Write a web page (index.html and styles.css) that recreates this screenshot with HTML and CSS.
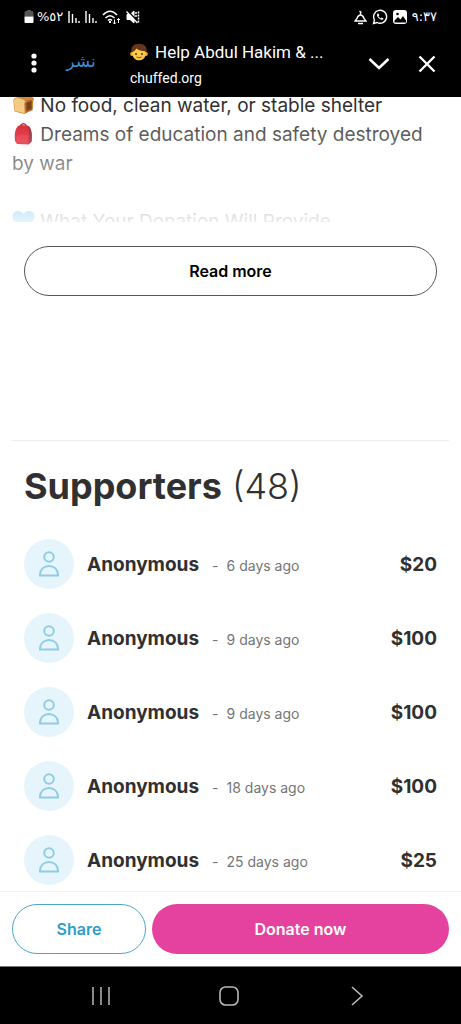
FILE: index.html
```html
<!DOCTYPE html>
<html lang="en">
<head>
<meta charset="utf-8">
<meta name="viewport" content="width=device-width, initial-scale=1">
<title>Help Abdul Hakim</title>
<link rel="stylesheet" href="styles.css">
</head>
<body>
<svg class="defs" aria-hidden="true">
  <symbol id="person" viewBox="0 0 24 28">
    <circle cx="12" cy="7" r="4.800"/>
    <path d="M3 25.500v-1c0-5 4-8.500 9-8.500s9 3.500 9 8.500v1z"/>
  </symbol>
</svg>

<header class="top">
  <div class="status">
    <div class="status-side">
      <svg class="battery" width="10" height="14" viewBox="0 0 10 14"><path d="M3 0h4v1h1.500l1 1v4.500H.5V2l1-1H3z" fill="#555"/><path d="M.5 6.500h9V12q0 1-1 1h-7q-1 0-1-1z" fill="#fff"/></svg>
      <span class="percent">%٥٢</span>
      <svg class="signal" width="12" height="14" viewBox="0 0 12 14"><path d="M1 1v12M4.500 4v9M8 8v5M11 11v2" stroke="#fff" stroke-width="1.400"/></svg>
      <svg class="signal" width="12" height="14" viewBox="0 0 12 14"><path d="M1 1v12M4.500 4v9M8 8v5M11 11v2" stroke="#fff" stroke-width="1.400"/></svg>
      <svg class="wifi" width="19" height="15" viewBox="0 0 19 15" fill="none" stroke="#fff" stroke-width="1.600"><path d="M1 5Q8-2.500 15 5M3.500 8Q8 3.500 12.500 8M6 10.500q2-2 4 0"/><path d="M8 11v2" stroke-width="2"/><path d="M12.500 9.500V14m-1.500-1.500l1.500 1.500 1.500-1.500M16.500 13V8.500M15 10l1.500-1.500L18 10" stroke-width="1"/></svg>
      <svg class="mute" width="14" height="14" viewBox="0 0 14 14" fill="none" stroke="#fff"><path d="M1 4.500h3L8 1v12L4 9.500H1z" fill="#fff"/><path d="M2 1l10 11" stroke="#000" stroke-width="1.500"/><path d="M.5 1.500l11 11.500" stroke-width="1.300"/><path d="M10 2v5M12.500 1.500v11" stroke-width="1.500" stroke-dasharray="2 1"/></svg>
    </div>
    <div class="status-side">
      <svg width="13" height="15" viewBox="0 0 13 15" fill="none" stroke="#fff" stroke-width="1.400"><path d="M6.500 5C4 5 3.500 7 3 8.500L1 11h11L10 8.500C9.500 7 9 5 6.500 5zM6.500 5V1.500M5.500 1l2 1.500M4 13.500h5"/></svg>
      <svg width="16" height="16" viewBox="0 0 16 16" fill="none" stroke="#fff" stroke-width="1.400"><path d="M1.500 14.500l1-3.500a6.500 6.500 0 1 1 2.600 2.500z"/><path d="M5.500 4.500c-2 2.500 3 7.500 5.500 6l.5-1-2-1-1 1-2-2 .8-1-.8-2z" fill="#fff" stroke="none"/></svg>
      <svg width="14" height="14" viewBox="0 0 14 14"><rect width="14" height="14" rx="3" fill="#fff"/><path d="M1.500 10.500L5 7l2.500 2.500L10 6l3 4.500v2H1.500z"/><circle cx="4.500" cy="4" r="1.300"/></svg>
      <time class="clock">٩:٣٧</time>
    </div>
  </div>
  <div class="browser">
    <button class="icon-button" aria-label="More options"><svg width="6" height="22" viewBox="0 0 6 22" fill="#fff"><circle cx="3" cy="3" r="2.600"/><circle cx="3" cy="10" r="2.600"/><circle cx="3" cy="17" r="2.600"/></svg></button>
    <button class="publish" lang="ar">نشر</button>
    <div class="page-id">
      <div class="page-title">
        <svg width="18" height="18" viewBox="0 0 18 18"><path d="M1.500 9.500C.5 3.500 4 .8 9 .8s8.500 2.700 7.500 8.700z" fill="#65371c"/><circle cx="2" cy="11" r="1.900" fill="#efaa22"/><circle cx="16" cy="11" r="1.900" fill="#efaa22"/><path d="M2.200 9C4 8.500 5.500 7 6.500 5.500c2 2 5.500 2.500 8 2.500l1.300 1.500c.2 5-2.800 7.800-6.800 7.800S1.900 14 2.200 9z" fill="#ffca42"/><circle cx="6" cy="11" r="1" fill="#45301f"/><circle cx="12" cy="11" r="1" fill="#45301f"/><path d="M6.500 14q2.500 1.800 5 0" fill="none" stroke="#8a4e18"/></svg>
        <span>Help Abdul Hakim &amp; ...</span>
      </div>
      <div class="domain">chuffed.org</div>
    </div>
    <button class="icon-button" aria-label="Minimise"><svg width="22" height="14" viewBox="0 0 22 14" fill="none" stroke="#fff" stroke-width="2.600"><path d="M1.500 2l9.500 9 9.500-9"/></svg></button>
    <button class="icon-button close" aria-label="Close"><svg width="18" height="18" viewBox="0 0 18 18" fill="none" stroke="#fff" stroke-width="2.400"><path d="M1.500 1.500l15 15M16.500 1.500l-15 15"/></svg></button>
  </div>
</header>

<main class="content">
  <section class="story">
    <p class="story-text">
      <svg class="emoji" viewBox="0 0 22 22"><path d="M1 8C0 4 4 3 8 3l10-.5c4 .5 4 3.500 2.500 5L20 16l-8 4-10-2.500z" fill="#d58b3b"/><path d="M1.500 8C0 4 6 3.500 9 5c4 1 4.500 3 3 5v9L2.500 17z" fill="#f3cb83"/><path d="M12 9c2-4 8-4 8-2v9l-7 3z" fill="#b76a28"/><path d="M14 9l5-2v8l-5 2z" fill="#79401b"/></svg>
      No food, clean water, or stable shelter<br>
      <svg class="emoji" viewBox="0 0 22 22"><path d="M8 2.500q3-3.500 6 0" fill="none" stroke="#a61c2b" stroke-width="1.500"/><path d="M2.500 18C1.500 10 3 3 8 2l7 .5c4 2 5 9 4 16l-3 3-11.500-.5z" fill="#d80a1c"/><path d="M15 2.500c4 2 5 9 4 16L16 21.500C17 14 17 7 15 2.500z" fill="#7c1220"/><path d="M4 12.500q6-1.500 11 0V19q-6 1-11 0z" fill="#e21426"/></svg>
      Dreams of education and safety destroyed by war<br><br>
      <svg class="emoji" viewBox="0 0 22 22"><path d="M11 20C5 15 0 12 0 6c0-5 8-7 11-2 3-5 11-3 11 2 0 6-5 9-11 14z" fill="#0098e4"/></svg>
      What Your Donation Will Provide
    </p>
  </section>
  <button class="button read-more">Read more</button>

  <section class="supporters">
    <h2 class="heading">Supporters <span class="count">(48)</span></h2>
    <ul class="list">
      <li class="row"><span class="avatar"><svg><use href="#person"/></svg></span><span class="name">Anonymous</span><span class="age"><span>-</span><span>6 days ago</span></span><span class="amount">$20</span></li>
      <li class="row"><span class="avatar"><svg><use href="#person"/></svg></span><span class="name">Anonymous</span><span class="age"><span>-</span><span>9 days ago</span></span><span class="amount">$100</span></li>
      <li class="row"><span class="avatar"><svg><use href="#person"/></svg></span><span class="name">Anonymous</span><span class="age"><span>-</span><span>9 days ago</span></span><span class="amount">$100</span></li>
      <li class="row"><span class="avatar"><svg><use href="#person"/></svg></span><span class="name">Anonymous</span><span class="age"><span>-</span><span>18 days ago</span></span><span class="amount">$100</span></li>
      <li class="row"><span class="avatar"><svg><use href="#person"/></svg></span><span class="name">Anonymous</span><span class="age"><span>-</span><span>25 days ago</span></span><span class="amount">$25</span></li>
    </ul>
  </section>
</main>

<div class="actions">
  <button class="button share">Share</button>
  <button class="button donate">Donate now</button>
</div>

<nav class="system-nav">
  <button class="icon-button" aria-label="Recent apps"><svg width="20" height="20" viewBox="0 0 20 20" stroke="#b8b8b8" stroke-width="1.500"><path d="M2 1v18M10 1v18M18 1v18"/></svg></button>
  <button class="icon-button" aria-label="Home"><svg width="20" height="20" viewBox="0 0 20 20" fill="none" stroke="#b8b8b8" stroke-width="1.600"><rect x="1" y="1" width="18" height="18" rx="5.500"/></svg></button>
  <button class="icon-button" aria-label="Back"><svg width="20" height="20" viewBox="0 0 20 20" fill="none" stroke="#b8b8b8" stroke-width="1.600"><path d="M5 1l10 9-10 9"/></svg></button>
</nav>
</body>
</html>
```
FILE: styles.css
```css
* { box-sizing: border-box; }

body {
  margin: 0;
  height: 100vh;
  display: flex;
  flex-direction: column;
  background: #fff;
  color: #303030;
  font-family: Inter, "Liberation Sans", sans-serif;
}

button { font: inherit; cursor: pointer; }
svg { flex: none; }
.defs { position: absolute; width: 0; height: 0; }

.top {
  flex: none;
  background: #000;
  color: #fff;
  font-family: Roboto, "Liberation Sans", sans-serif;
}

.status {
  display: flex;
  justify-content: space-between;
  height: 34px;
  padding: 0 24px;
}
.status-side { display: flex; align-items: center; gap: 5px; }
.percent, .clock { font: 13px/20px "DejaVu Sans", sans-serif; }
.percent { margin-left: -2px; }

.browser {
  display: flex;
  align-items: center;
  height: 63px;
  padding: 0 24px 4px;
}
.icon-button {
  display: flex;
  padding: 0;
  border: 0;
  background: none;
}
.browser .icon-button { width: 20px; justify-content: center; }
.publish {
  width: 74px;
  padding: 0 0 6px;
  border: 0;
  background: none;
  color: #3a8fd8;
  font: 17px/24px "DejaVu Sans", sans-serif;
}
.page-id { flex: 1; padding-left: 12px; min-width: 0; }
.page-title {
  display: flex;
  align-items: center;
  gap: 7px;
  font-size: 17px;
  line-height: 28px;
  white-space: nowrap;
}
.domain { font-size: 14px; line-height: 24px; }
.browser .close { margin-left: 28px; }

.content { flex: 1; min-height: 0; overflow: hidden; }

.story {
  position: relative;
  height: 125px;
  padding: 0 24px 0 12px;
  overflow: hidden;
}
.story::after {
  content: "";
  position: absolute;
  inset: 0;
  background: linear-gradient(rgba(255, 255, 255, 0) 8%, rgba(255, 255, 255, 0.9));
}
.story-text {
  margin: -6px 0 0;
  font-size: 19px;
  line-height: 29px;
}
.emoji { width: 23px; height: 22px; vertical-align: -4px; }

.button {
  height: 50px;
  padding: 0;
  border-radius: 25px;
  font-size: 16px;
  font-weight: 600;
}
.read-more {
  display: block;
  width: calc(100% - 48px);
  margin: 24px 24px 0;
  border: 1px solid #555;
  background: #fff;
  color: #000;
}

.supporters {
  margin: 144px 12px 0;
  padding: 20px 12px 0;
  border-top: 1px solid #eee;
}
.heading {
  display: flex;
  gap: 10px;
  margin: 0 0 28px;
  font-size: 36px;
  line-height: 50px;
  font-weight: 700;
}
.count { font-weight: 300; }
.list {
  display: grid;
  gap: 24px;
  margin: 0;
  padding: 0;
  list-style: none;
}
.row { display: flex; align-items: center; }
.avatar {
  display: flex;
  align-items: center;
  justify-content: center;
  width: 50px;
  height: 50px;
  border-radius: 50%;
  background: #e6f5fc;
}
.avatar svg {
  width: 24px;
  height: 28px;
  fill: none;
  stroke: #90cde5;
  stroke-width: 2px;
}
.name { margin-left: 13px; font-size: 19px; font-weight: 700; }
.age {
  display: flex;
  gap: 8px;
  margin-left: 13px;
  padding-top: 3px;
  color: #757575;
  font-size: 14px;
}
.amount { margin-left: auto; font-size: 19px; font-weight: 700; }

.actions {
  flex: none;
  display: flex;
  gap: 6px;
  padding: 12px;
  border-top: 1px solid #f3f3f3;
  background: #fff;
}
.share {
  flex: 4;
  border: 1px solid #4aa5c9;
  background: #fff;
  color: #2b9dcb;
}
.donate {
  flex: 9;
  border: 0;
  background: #e5429f;
  color: #fff;
}

.system-nav {
  flex: none;
  display: flex;
  align-items: center;
  justify-content: center;
  gap: 108px;
  height: 58px;
  padding-right: 3px;
  border-top: 1px solid #777;
  background: #000;
}
```
